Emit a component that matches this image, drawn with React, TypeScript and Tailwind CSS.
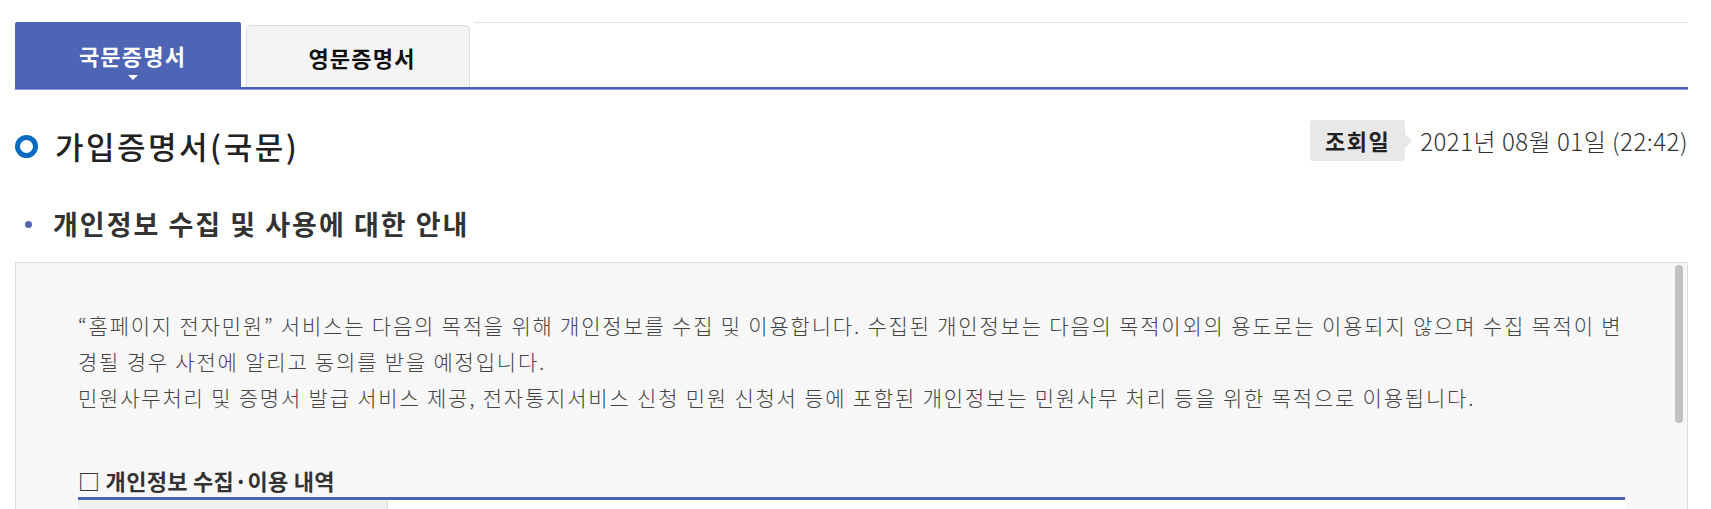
import React from "react";

export default function App() {
  return (
    <div className="min-h-[509px] bg-white pl-[15px] pr-[23px] pt-[22px] font-['Noto_Sans_CJK_KR','Noto_Sans',sans-serif] text-[#333]">
      {/* Tabs */}
      <div className="flex h-[65px] items-end">
        <div className="flex h-full w-[226px] flex-col items-center rounded-t-[2px] bg-[#4e64b4] pl-[9px] pt-[20px]">
          <span className="text-[22px] font-bold leading-[26px] tracking-[1.2px] text-white">국문증명서</span>
          <span className="mt-[7px] h-0 w-0 border-x-[5px] border-t-[5px] border-x-transparent border-t-white" />
        </div>
        <div className="ml-[5px] flex h-[62px] w-[224px] items-center justify-center rounded-t-[5px] border border-b-0 border-[#dedede] bg-[#f4f4f4] pl-[8px]">
          <span className="text-[22px] font-bold leading-[26px] tracking-[1.2px] text-[#111]">영문증명서</span>
        </div>
        <div className="ml-[4px] h-full flex-1 border-t border-[#dde2f4]" />
      </div>
      <div className="h-[2px] bg-[#4a60b0]" />
      <div className="h-[1px] bg-[#8e9bd6]" />

      {/* Title row */}
      <div className="mt-[30px] flex items-start justify-between">
        <div className="flex h-[52px] items-center">
          <span className="h-[23px] w-[23px] rounded-full border-[5px] border-[#0b6bc1]" />
          <h1 className="ml-[17px] text-[31px] font-medium leading-[40px] tracking-[2.5px] text-[#222]">
            가입증명서(국문)
          </h1>
        </div>
        <div className="flex items-center">
          <div className="relative flex h-[41px] w-[95px] items-center justify-center rounded-[3px] bg-[#e8e8e8]">
            <span className="text-[22px] font-bold tracking-[1.5px] text-[#222]">조회일</span>
            <span className="absolute left-full top-1/2 h-0 w-0 -translate-y-1/2 border-y-[7px] border-l-[7px] border-y-transparent border-l-[#e8e8e8]" />
          </div>
          <span className="ml-[15px] text-[24px] font-light tracking-[0.5px] text-[#333]">
            2021년 08월 01일 (22:42)
          </span>
        </div>
      </div>

      {/* Subtitle */}
      <div className="mt-[32px] flex h-[40px] items-center">
        <span className="ml-[10px] h-[7px] w-[7px] rounded-full bg-[#5364b4]" />
        <h2 className="ml-[21px] text-[27px] font-bold leading-[34px] tracking-[2px] text-[#333]">
          개인정보 수집 및 사용에 대한 안내
        </h2>
      </div>

      {/* Content box */}
      <div className="relative mt-[18px] border border-[#dcdcdc] bg-[#f7f7f7] pb-[40px] pl-[62px] pr-[62px] pt-[44px]">
        <div className="text-[21px] font-light leading-[36px] tracking-[1.8px] text-[#444]">
          <p className="whitespace-nowrap">
            “홈페이지 전자민원” 서비스는 다음의 목적을 위해 개인정보를 수집 및 이용합니다. 수집된 개인정보는 다음의 목적이외의 용도로는 이용되지 않으며 수집 목적이 변
          </p>
          <p className="whitespace-nowrap">경될 경우 사전에 알리고 동의를 받을 예정입니다.</p>
          <p className="whitespace-nowrap">
            민원사무처리 및 증명서 발급 서비스 제공, 전자통지서비스 신청 민원 신청서 등에 포함된 개인정보는 민원사무 처리 등을 위한 목적으로 이용됩니다.
          </p>
        </div>

        <h3 className="mt-[51px] text-[22px] font-bold leading-[28px] tracking-[0.3px] text-[#333]">
          □ 개인정보 수집·이용 내역
        </h3>
        <div className="mt-[3px] h-[3px] bg-[#4b63b4]" />
        <div className="flex h-[80px] border-b border-[#dcdcdc] bg-white">
          <div className="w-[310px] border-r border-[#dcdcdc] bg-[#f0f0f0]" />
          <div className="flex-1" />
        </div>

        {/* scrollbar thumb */}
        <div className="absolute right-[4px] top-[2px] h-[158px] w-[8px] rounded-full bg-[#c1c1c1]" />
      </div>
    </div>
  );
}
